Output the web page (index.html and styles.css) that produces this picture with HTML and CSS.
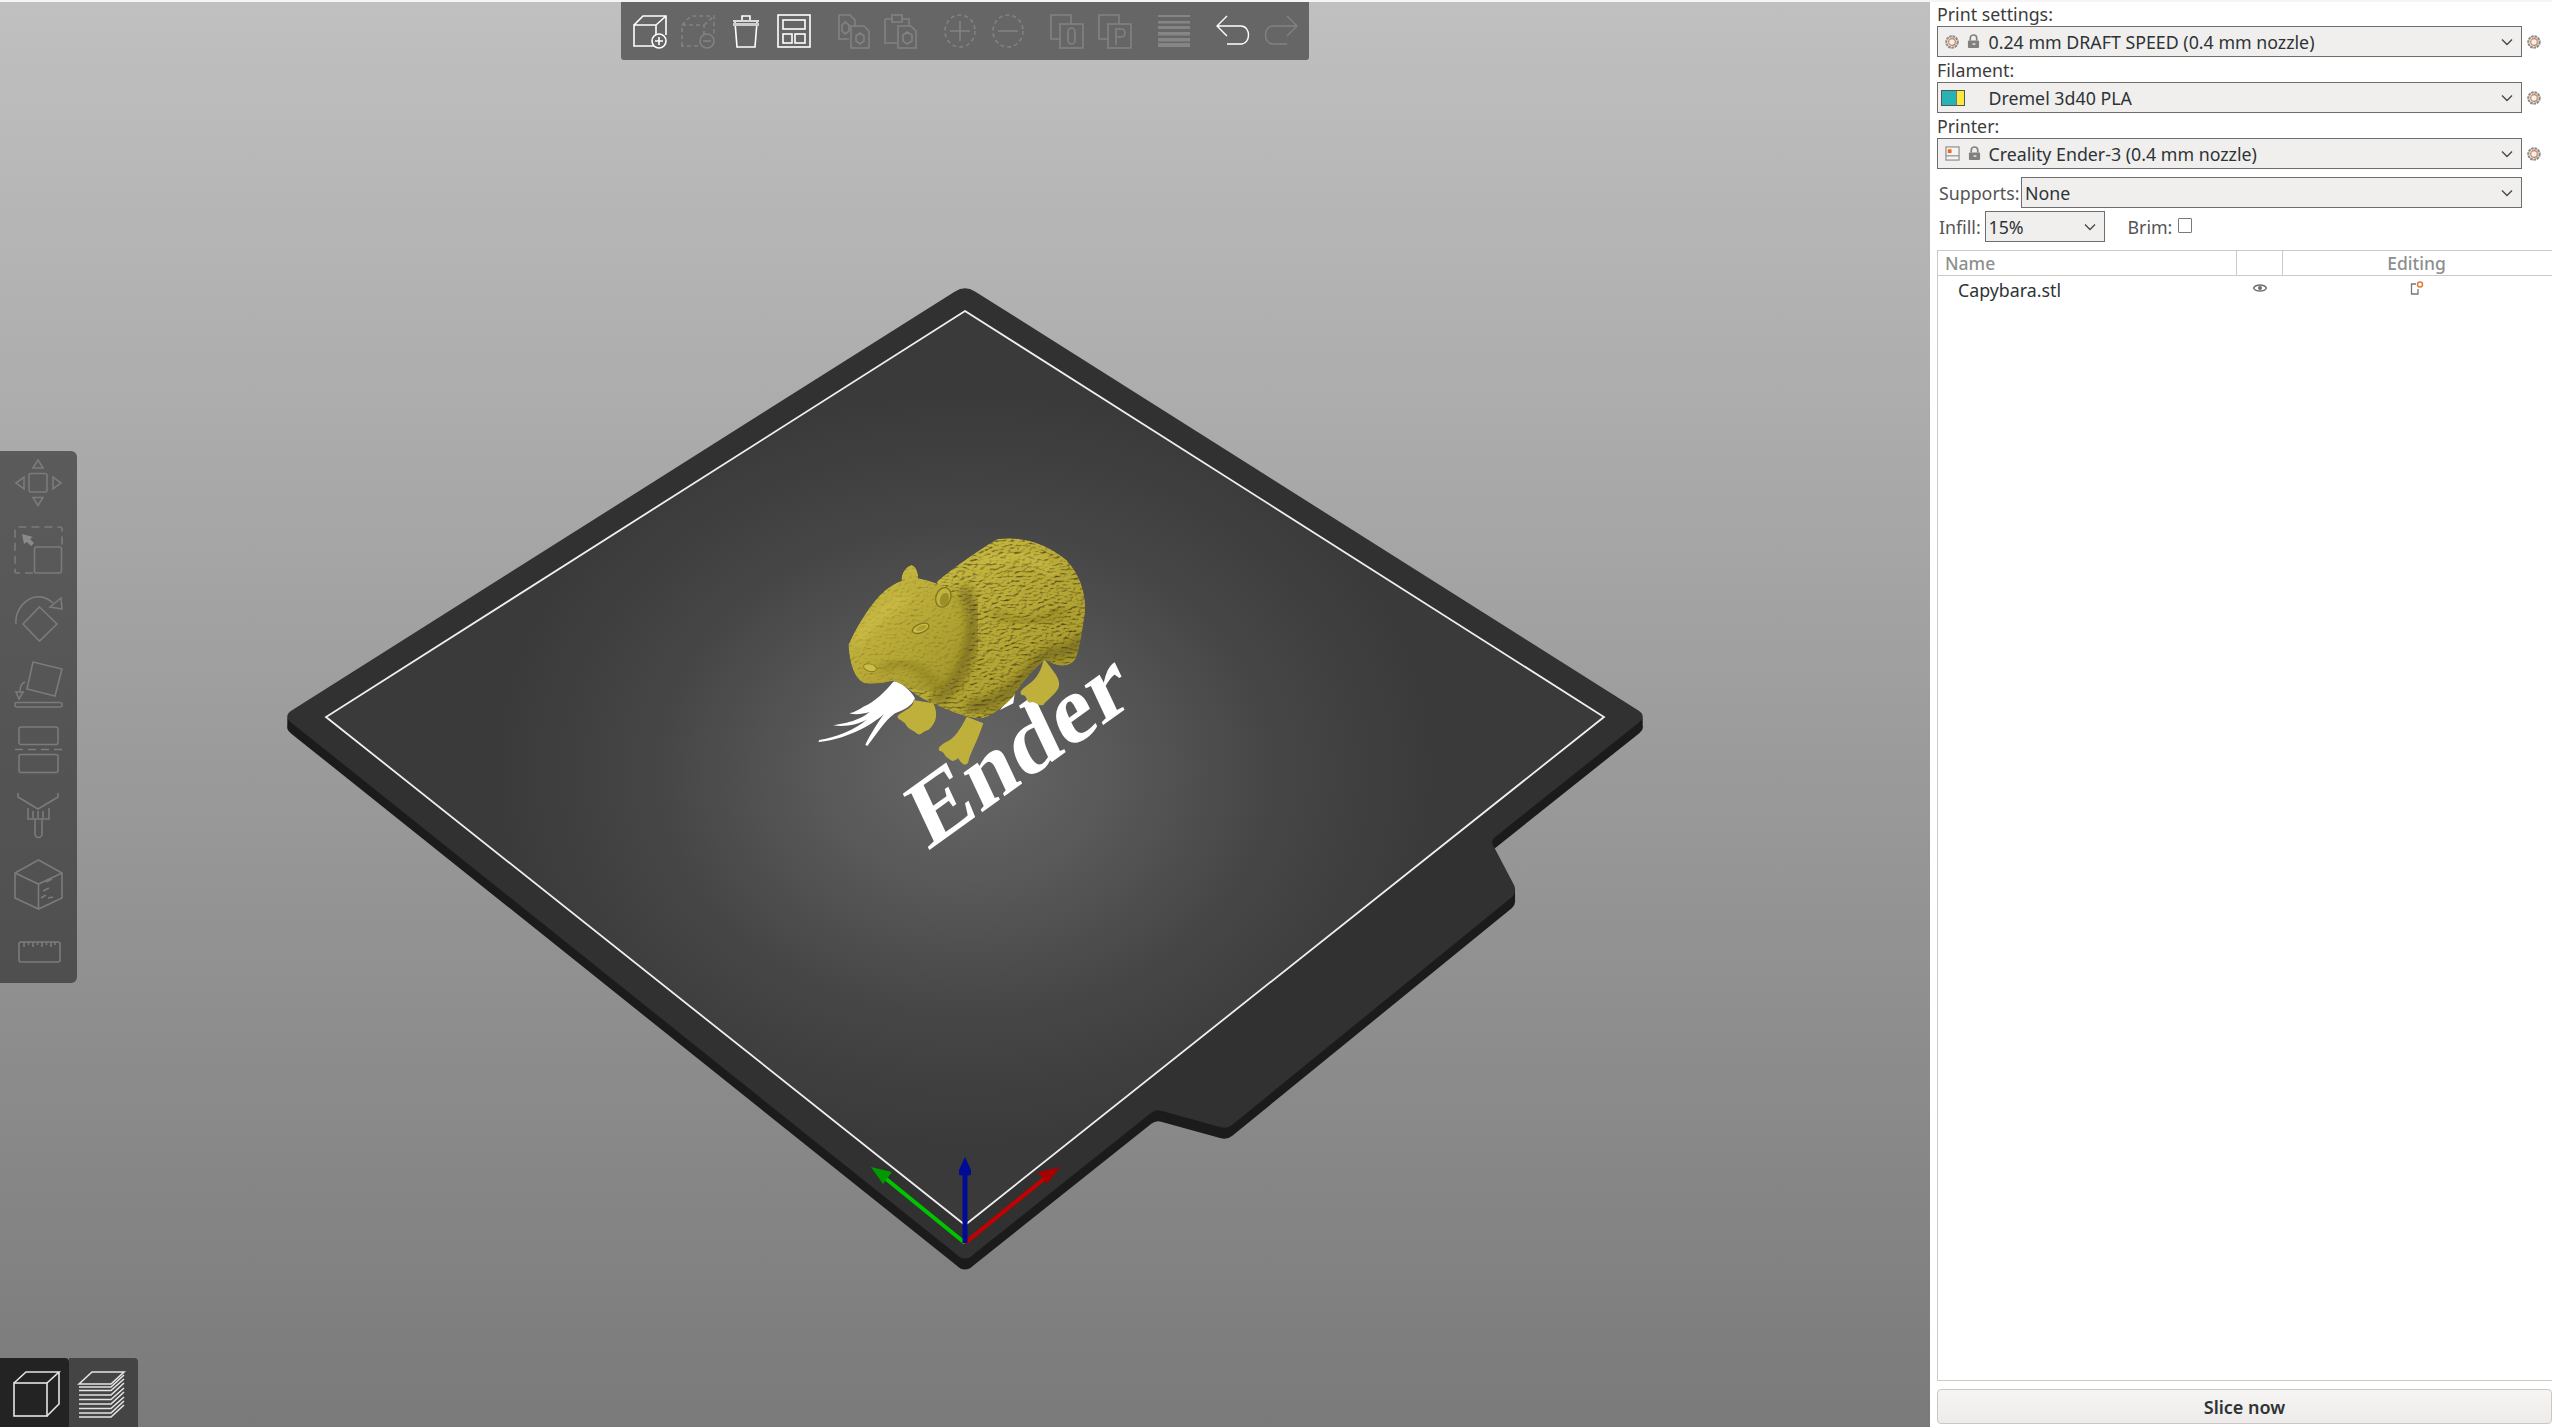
FILE: index.html
```html
<!DOCTYPE html>
<html lang="en">
<head>
<meta charset="utf-8">
<title>PrusaSlicer</title>
<link rel="stylesheet" href="styles.css">
</head>
<body>
<div class="app">
  <main class="viewport">
    <svg class="scene" viewBox="0 0 1930 1425" aria-hidden="true">
      <defs>
        <radialGradient id="bedGlow" gradientUnits="userSpaceOnUse" cx="965" cy="770" r="470" gradientTransform="translate(965 770) scale(1 .8) translate(-965 -770)">
          <stop offset="0" stop-color="#666666"/>
          <stop offset=".3" stop-color="#595959"/>
          <stop offset=".65" stop-color="#464646"/>
          <stop offset="1" stop-color="#3a3a3a"/>
        </radialGradient>
        <linearGradient id="gold" x1="0" y1="0" x2="1" y2="1">
          <stop offset="0" stop-color="#cfc046"/>
          <stop offset=".5" stop-color="#b9aa37"/>
          <stop offset="1" stop-color="#a09329"/>
        </linearGradient>
        <path id="plate" d="M955 291.400Q965 285 975 291.400L1638 710.300Q1647 716 1639 722.400L1494 838Q1491 841 1493 845L1514 885Q1517 892 1512 897L1232 1125Q1227 1129 1220 1127L1162 1111Q1156 1109 1151 1113L974 1254Q965 1263 956 1254L291 722.400Q283 716 292 710.300Z"/>
        <filter id="fur" x="0" y="0" width="1" height="1" color-interpolation-filters="sRGB">
          <feTurbulence type="fractalNoise" baseFrequency=".06 .14" numOctaves="4" seed="7" result="n"/>
          <feDiffuseLighting in="n" surfaceScale="5" lighting-color="#ffffff" diffuseConstant="1.150" result="l">
            <feDistantLight azimuth="235" elevation="60"/>
          </feDiffuseLighting>
          <feComposite in="SourceGraphic" in2="l" operator="arithmetic" k1="1" result="m"/>
          <feComposite in="m" in2="SourceAlpha" operator="in"/>
        </filter>
        <filter id="softFur" x="0" y="0" width="1" height="1" color-interpolation-filters="sRGB">
          <feTurbulence type="fractalNoise" baseFrequency=".08 .12" numOctaves="3" seed="3" result="n"/>
          <feDiffuseLighting in="n" surfaceScale="2.200" lighting-color="#ffffff" diffuseConstant="1.120" result="l">
            <feDistantLight azimuth="235" elevation="64"/>
          </feDiffuseLighting>
          <feComposite in="SourceGraphic" in2="l" operator="arithmetic" k1="1" result="m"/>
          <feComposite in="m" in2="SourceAlpha" operator="in"/>
        </filter>
        <filter id="blur14"><feGaussianBlur stdDeviation="14"/></filter>
        <clipPath id="capyClip">
          <path d="M470 215C520 175 580 130 650 88C720 75 800 100 860 150C900 195 920 250 915 310C905 370 900 420 885 450C865 475 830 470 795 450C770 470 730 510 700 560C660 600 620 630 590 625C550 620 500 600 470 585C430 570 400 550 370 525L500 300Z"/>
          <path d="M205 405C225 360 255 305 300 255C320 235 345 218 365 212C362 195 375 170 395 165C410 170 415 190 415 205C440 210 475 220 500 235C545 265 570 310 575 360C575 430 540 500 480 540C430 555 380 530 340 512C310 520 270 525 250 518C225 505 210 470 205 405Z"/>
        </clipPath>
      </defs>

      <g class="plate-side">
        <use href="#plate" y="3"/>
        <use href="#plate" y="6"/>
        <use href="#plate" y="9"/>
        <use href="#plate" y="11"/>
      </g>
      <use href="#plate" class="plate-top"/>
      <polygon class="plate-inner" points="965,311 1604,717 965,1225 326,717"/>

      <text class="bed-text" transform="matrix(.778 -.560 .404 .859 928 851)">Ender</text>

      <g transform="translate(780 510) scale(.33333)">
        <path class="logo" d="M340 515C360 512 395 545 405 565C395 590 370 600 345 610C315 630 285 680 262 708L256 704C270 675 292 640 312 612C270 650 190 690 115 696L118 690C170 682 225 660 262 628C235 645 190 652 160 646L200 638C225 632 250 622 268 606C250 612 225 615 208 610C225 606 238 598 250 590C285 575 315 545 340 515Z"/>
        <path class="logo" d="M660 600C680 575 695 550 708 522L700 580Z"/>
        <path class="capy" d="M795 450C825 490 845 510 835 535C820 560 800 570 790 585C770 590 765 570 750 578C735 575 745 555 725 555C715 545 730 535 750 520C770 505 785 480 790 450Z"/>
        <path class="capy" d="M400 570C405 590 375 600 355 615C345 625 365 630 375 640C385 660 400 660 410 670C420 680 425 665 445 660C470 640 475 610 460 580Z"/>
        <path class="capy" d="M560 620C545 650 530 675 510 690C490 700 470 712 478 722C495 725 490 735 505 745C520 760 525 750 535 745C545 765 560 770 565 755C570 730 590 700 610 640Z"/>
        <path class="capy capy-fur" d="M470 215C520 175 580 130 650 88C720 75 800 100 860 150C900 195 920 250 915 310C905 370 900 420 885 450C865 475 830 470 795 450C770 470 730 510 700 560C660 600 620 630 590 625C550 620 500 600 470 585C430 570 400 550 370 525L500 300Z"/>
        <path class="capy capy-head" d="M205 405C225 360 255 305 300 255C320 235 345 218 365 212C362 195 375 170 395 165C410 170 415 190 415 205C440 210 475 220 500 235C545 265 570 310 575 360C575 430 540 500 480 540C430 555 380 530 340 512C310 520 270 525 250 518C225 505 210 470 205 405Z"/>
        <g clip-path="url(#capyClip)">
          <path class="capy-shade" d="M545 235C590 290 590 370 560 450C540 510 500 550 460 570"/>
          <path class="capy-shade" d="M560 590C660 590 720 520 790 440C830 420 880 430 910 380"/>
          <path class="capy-shade thin" d="M300 480C360 440 420 460 470 530"/>
          <path class="capy-shade thin" d="M640 300C700 360 780 340 860 300"/>
          <path class="capy-light" d="M230 395C270 340 320 290 380 262"/>
          <path class="capy-light" d="M610 160C680 120 760 130 820 190"/>
        </g>
        <ellipse class="capy-ear" cx="490" cy="262" rx="22" ry="30" transform="rotate(20 490 262)"/>
        <ellipse class="capy-ear-in" cx="493" cy="268" rx="13" ry="20" transform="rotate(20 493 268)"/>
        <ellipse class="capy-eye" cx="422" cy="355" rx="26" ry="13" transform="rotate(-22 422 355)"/>
        <ellipse class="capy-eye-in" cx="424" cy="354" rx="17" ry="7" transform="rotate(-22 424 354)"/>
        <ellipse class="capy-nose" cx="270" cy="473" rx="20" ry="11" transform="rotate(15 270 473)"/>
      </g>

      <g class="axis axis-green">
        <line x1="965" y1="1243" x2="885" y2="1178"/>
        <polygon points="871,1167 892,1172 883,1184"/>
      </g>
      <g class="axis axis-red">
        <line x1="965" y1="1243" x2="1045" y2="1178"/>
        <polygon points="1060,1167 1038,1172 1047,1184"/>
      </g>
      <g class="axis axis-blue">
        <line x1="965" y1="1243" x2="965" y2="1172"/>
        <polygon points="965,1157 971,1170 971,1175 965,1176 959,1175 959,1170"/>
      </g>
    </svg>

    <nav class="top-toolbar">
      <div class="tool-group">
        <svg class="tb-icon on" viewBox="0 0 34 34"><path d="M1 32V11h22v21zM1 11L10 2h23v19M23 11L33 2"/><circle class="punch" cx="26" cy="27" r="7"/><path d="M26 23v8M22 27h8"/></svg>
        <svg class="tb-icon off" viewBox="0 0 34 34"><path class="dash" d="M1 32V11h22v21zM1 11L10 2h23v19M23 11L33 2"/><circle class="punch" cx="26" cy="27" r="7"/><path d="M22 27h8"/></svg>
        <svg class="tb-icon on" viewBox="0 0 34 34"><path d="M4 7h26M13 6V2h8v4M6 8l2 25h18l2-25"/><path class="thick" d="M4 10.500h26"/></svg>
        <svg class="tb-icon on" viewBox="0 0 34 34"><rect x="1" y="1" width="32" height="32"/><rect x="6" y="6" width="22" height="9"/><rect x="6" y="20" width="9" height="9"/><rect x="18" y="20" width="10" height="9"/></svg>
      </div>
      <div class="tool-group">
        <svg class="tb-icon off" viewBox="0 0 34 34"><path d="M3 1h11l5 5v6M3 1v24h10M21 12h7l5 5v17H15V12zM24 19l4 3v5l-4 3-4-3v-5z"/><path d="M9 8l4 3v6l-4 3-3-3v-6z"/></svg>
        <svg class="tb-icon off" viewBox="0 0 34 34"><path d="M1 5h7V1h10v4h7v6M8 5v3h10V5M1 5v24h12M14 12h13l5 5v17H14zM23 18l5 3v6l-5 3-4-3v-6z"/></svg>
      </div>
      <div class="tool-group">
        <svg class="tb-icon off" viewBox="0 0 34 34"><ellipse class="dash" cx="17" cy="17" rx="15" ry="16"/><path d="M17 7v20M7 17h20"/></svg>
        <svg class="tb-icon off" viewBox="0 0 34 34"><ellipse class="dash" cx="17" cy="17" rx="15" ry="16"/><path d="M7 17h20"/></svg>
      </div>
      <div class="tool-group">
        <svg class="tb-icon off" viewBox="0 0 34 34"><path d="M10 25H1V1h20v9"/><rect x="10" y="10" width="23" height="24"/><rect x="18" y="14" width="7" height="16" rx="3.500"/></svg>
        <svg class="tb-icon off" viewBox="0 0 34 34"><path d="M10 25H1V1h20v9"/><rect x="10" y="10" width="23" height="24"/><path d="M18 31V15h5a4 4 0 010 8h-5"/></svg>
      </div>
      <div class="tool-group">
        <svg class="tb-icon off bars" viewBox="0 0 34 34"><rect x="1" y="1" width="32" height="2"/><rect x="1" y="7" width="32" height="2.500"/><rect x="1" y="12" width="32" height="3"/><rect x="1" y="18" width="32" height="3.500"/><rect x="1" y="24" width="32" height="3.500"/><rect x="1" y="29" width="32" height="4"/></svg>
      </div>
      <div class="tool-group">
        <svg class="tb-icon on thin" viewBox="0 0 34 34"><path d="M1 12h24c10 0 10 18 0 18H11M11 2L1 12l10 10"/></svg>
        <svg class="tb-icon off thin" viewBox="0 0 34 34"><path d="M33 12H9C-1 12-1 30 9 30h14M23 2l10 10-10 10"/></svg>
      </div>
    </nav>

    <nav class="left-toolbar">
      <svg class="lt-icon" viewBox="0 0 48 48"><rect x="15" y="14.500" width="18" height="18.500" rx="2"/><path d="M24 1l-5 8h10zM24 46.500l-5-8h10zM2 24l8-6v12zM47 24l-8-6v12z"/></svg>
      <svg class="lt-icon" viewBox="0 0 48 48"><path class="dash-l" d="M19 47H3a2 2 0 01-2-2V3a2 2 0 012-2h43a2 2 0 012 2v16"/><rect x="20.500" y="21" width="27" height="26" rx="2"/><path class="fill-l" d="M8 8l11 3-3 2 4 4-3 3-4-4-3 2z"/></svg>
      <svg class="lt-icon" viewBox="0 0 48 48"><path d="M25.500 14L43 31 25.500 48 9 31zM2 31C0 12 22-6 39 10M47 5l-11 9 12 2z"/></svg>
      <svg class="lt-icon" viewBox="0 0 48 48"><rect x="1" y="43.500" width="47" height="4.500" rx="2"/><path d="M19 3l29 7-7 27-28-7zM11 23C8 24 6 27 6 33M2 33h7l-4 7z"/></svg>
      <svg class="lt-icon" viewBox="0 0 48 48"><rect x="5" y="1" width="39" height="17.500" rx="2"/><rect x="5" y="28.500" width="39" height="18" rx="2"/><path class="dash-l" d="M1 23.500h47"/></svg>
      <svg class="lt-icon" viewBox="0 0 48 48"><path d="M4 0v4l20 12 20-12V0M14 15v11h21V15M19 18v7M24 18v7M29 18v7M21 26v15a3 3 0 007 0V26"/></svg>
      <svg class="lt-icon" viewBox="0 0 48 48"><path d="M24.500 0L48 13v25L24.500 49 1 38V13zM1 13l23.500 11L48 13M24.500 24v25M32 22l6-3M29 31l6-3M27 38l5-3M34 38l5-1"/></svg>
      <svg class="lt-icon" viewBox="0 0 48 48"><path d="M7 15h37a2 2 0 012 2v16a2 2 0 01-2 2H7a2 2 0 01-2-2V17a2 2 0 012-2zM10 15v5M14.500 15v3M19 15v5M23.500 15v3M28 15v5M32.500 15v3M37 15v5M41 15v3"/></svg>
    </nav>

    <nav class="view-toolbar">
      <div class="view-btn active">
        <svg class="view-icon" viewBox="0 0 54 54"><rect x="4" y="14" width="33" height="33"/><path d="M4 14L16 3h33l-12 11M49 3v32L37 47"/></svg>
      </div>
      <div class="view-btn second">
        <svg class="view-icon" viewBox="0 0 54 54"><path d="M2 15L15 3h32L34 15zM2 18h32L47 6M2 21.500h32L47 10M2 26h32L47 14M2 30.500h32L47 19M2 35h32L47 23M2 39.500h32L47 28M2 44h32L47 32M2 48h32L47 36"/></svg>
      </div>
    </nav>
  </main>

  <aside class="sidebar">
    <div class="field-label">Print settings:</div>
    <div class="preset-row">
      <div class="combo combo-preset">
        <span class="combo-icons">
          <svg class="ico-gear" viewBox="0 0 16 16"><circle class="gear-out" cx="8" cy="8" r="6.500"/><circle class="gear-in" cx="8" cy="8" r="3.800"/></svg>
          <svg class="ico-lock" viewBox="0 0 14 16"><path class="lock-bow" d="M3.500 7V4.500a3.500 3.500 0 017 0V7"/><rect class="lock-body" x="1" y="7" width="12" height="8" rx="1"/><rect class="lock-hole" x="6" y="10" width="3" height="1.500"/></svg>
        </span>
        <span class="combo-text">0.24 mm DRAFT SPEED (0.4 mm nozzle)</span>
        <svg class="chev" viewBox="0 0 12 8"><path d="M1 1.500l5 5 5-5"/></svg>
      </div>
      <svg class="ico-gear side-gear" viewBox="0 0 16 16"><circle class="gear-out" cx="8" cy="8" r="6.500"/><circle class="gear-in" cx="8" cy="8" r="3.800"/></svg>
    </div>
    <div class="field-label">Filament:</div>
    <div class="preset-row">
      <div class="combo combo-preset">
        <span class="combo-icons combo-swatch-wrap"><span class="swatch"><span class="swatch-a"></span><span class="swatch-b"></span></span></span>
        <span class="combo-text">Dremel 3d40 PLA</span>
        <svg class="chev" viewBox="0 0 12 8"><path d="M1 1.500l5 5 5-5"/></svg>
      </div>
      <svg class="ico-gear side-gear" viewBox="0 0 16 16"><circle class="gear-out" cx="8" cy="8" r="6.500"/><circle class="gear-in" cx="8" cy="8" r="3.800"/></svg>
    </div>
    <div class="field-label">Printer:</div>
    <div class="preset-row">
      <div class="combo combo-preset">
        <span class="combo-icons">
          <svg class="ico-printer" viewBox="0 0 16 16"><rect class="prn-box" x="1" y="1" width="14" height="14"/><path class="prn-line" d="M1 10.500h14"/><rect class="prn-dot" x="3" y="3.500" width="4" height="4"/></svg>
          <svg class="ico-lock" viewBox="0 0 14 16"><path class="lock-bow" d="M3.500 7V4.500a3.500 3.500 0 017 0V7"/><rect class="lock-body" x="1" y="7" width="12" height="8" rx="1"/><rect class="lock-hole" x="6" y="10" width="3" height="1.500"/></svg>
        </span>
        <span class="combo-text">Creality Ender-3 (0.4 mm nozzle)</span>
        <svg class="chev" viewBox="0 0 12 8"><path d="M1 1.500l5 5 5-5"/></svg>
      </div>
      <svg class="ico-gear side-gear" viewBox="0 0 16 16"><circle class="gear-out" cx="8" cy="8" r="6.500"/><circle class="gear-in" cx="8" cy="8" r="3.800"/></svg>
    </div>
    <div class="option-row supports-row">
      <span class="opt-label">Supports:</span>
      <div class="combo combo-supports">
        <span class="combo-text">None</span>
        <svg class="chev" viewBox="0 0 12 8"><path d="M1 1.500l5 5 5-5"/></svg>
      </div>
    </div>
    <div class="option-row infill-row">
      <span class="opt-label">Infill:</span>
      <div class="combo combo-infill">
        <span class="combo-text">15%</span>
        <svg class="chev" viewBox="0 0 12 8"><path d="M1 1.500l5 5 5-5"/></svg>
      </div>
      <span class="opt-label brim-label">Brim:</span>
      <span class="checkbox"></span>
    </div>
    <section class="objects">
      <div class="obj-head">
        <span class="col-name">Name</span>
        <span class="col-eye"></span>
        <span class="col-edit">Editing</span>
      </div>
      <div class="obj-row">
        <span class="cell-name">Capybara.stl</span>
        <span class="cell-eye">
          <svg class="ico-eye" viewBox="0 0 14 10"><path d="M.5 5C3 1 11 1 13.500 5 11 9 3 9 .5 5z"/><circle cx="7" cy="5" r="2"/></svg>
        </span>
        <span class="cell-edit">
          <svg class="ico-edit" viewBox="0 0 14 14"><path class="edit-doc" d="M6 3H1.500v10h6.500V8"/><circle class="edit-dot" cx="10" cy="3.500" r="2.500"/></svg>
        </span>
      </div>
    </section>
    <button class="slice-btn" type="button">Slice now</button>
  </aside>
</div>
</body>
</html>
```
FILE: styles.css
```css
* { box-sizing: border-box; }
html, body { margin: 0; height: 100%; overflow: hidden; }
body {
  font-family: "Noto Sans", "Liberation Sans", sans-serif;
  font-size: 17.800px;
  color: #2e3436;
  background: #f6f5f4;
}
.app { display: flex; height: 1427px; padding-top: 2px; }

/* 3D viewport */
.viewport {
  position: relative;
  flex: 0 0 1930px;
  background: linear-gradient(#c0c0c0, #7a7a7a);
  overflow: hidden;
}
.scene { position: absolute; inset: 0; width: 1930px; height: 1425px; transform: translateY(-2px); overflow: visible; }
.plate-side { fill: #1b1b1b; }
.plate-top { fill: #313131; }
.plate-inner { fill: url(#bedGlow); stroke: #efefef; stroke-width: 1.8; stroke-linejoin: miter; }
.bed-text { font-family: "Liberation Serif", serif; font-weight: 700; font-size: 100px; fill: #fff; }
.logo { fill: #fff; }
.capy { fill: #bfb03c; }
.capy-fur { fill: url(#gold); filter: url(#fur); }
.capy-head { fill: url(#gold); filter: url(#softFur); }
.capy-shade { fill: none; stroke: #5f570f; stroke-width: 36; stroke-opacity: .6; filter: url(#blur14); }
.capy-shade.thin { stroke-width: 20; stroke-opacity: .4; }
.capy-light { fill: none; stroke: #e0d156; stroke-width: 20; stroke-opacity: .45; filter: url(#blur14); }
.capy-ear { fill: #c2b33e; stroke: #7f751c; stroke-width: 4; }
.capy-ear-in { fill: #9a8e28; }
.capy-eye { fill: #cdbe46; stroke: #7f751c; stroke-width: 4; }
.capy-eye-in { fill: #ad9f30; }
.capy-nose { fill: #cdbe46; stroke: #8b8026; stroke-width: 3; }
.axis line { stroke-width: 4; }
.axis-green line { stroke: #00c400; }
.axis-green polygon { fill: #009a00; }
.axis-red line { stroke: #c40000; }
.axis-red polygon { fill: #a80000; }
.axis-blue line { stroke: #000c96; stroke-width: 5; }
.axis-blue polygon { fill: #000c96; }

/* top toolbar */
.top-toolbar {
  position: absolute;
  top: 0;
  left: 621px;
  width: 688px;
  height: 58px;
  padding: 0 12px;
  display: flex;
  align-items: center;
  gap: 25px;
  background: #666;
  border-radius: 0 0 3px 3px;
}
.tool-group { display: flex; gap: 14px; }
.tb-icon { width: 34px; height: 34px; fill: none; stroke-width: 1.6; overflow: visible; }
.tb-icon.on { stroke: #fff; }
.tb-icon.off { stroke: #828282; }
.tb-icon .dash { stroke-dasharray: 4 3; }
.tb-icon .punch { fill: #666; }
.tb-icon .thick { stroke-width: 3; stroke: #ccc; }
.tb-icon.bars { fill: #858585; stroke: none; }
.tb-icon.thin { stroke-width: 1.4; }

/* left toolbar */
.left-toolbar {
  position: absolute;
  left: 0;
  top: 449px;
  width: 77px;
  height: 532px;
  padding: 8px 0 0 14px;
  display: flex;
  flex-direction: column;
  gap: 18.800px;
  background: linear-gradient(#5b5b5b, #4f4f4f);
  border-radius: 0 6px 6px 0;
}
.lt-icon { flex: none; width: 48px; height: 48px; fill: none; stroke: #7b7b7b; stroke-width: 1.6; overflow: visible; }
.lt-icon .dash-l { stroke-dasharray: 8 5; }
.lt-icon .fill-l { fill: #8a8a8a; stroke: none; }

/* view toolbar */
.view-toolbar {
  position: absolute;
  left: 0;
  bottom: 0;
  display: flex;
  height: 69px;
}
.view-btn {
  width: 69px;
  display: flex;
  align-items: center;
  justify-content: center;
  background: #444;
  border-radius: 0 4px 0 0;
}
.view-btn.active { background: #232323; padding-left: 4px; }
.view-icon { width: 54px; height: 54px; fill: none; stroke: #e4e4e4; stroke-width: 1.600; margin-top: 6px; }

/* sidebar */
.sidebar {
  flex: 1;
  min-width: 0;
  display: flex;
  flex-direction: column;
  padding-left: 7px;
  background: #fff;
}
.field-label {
  height: 25px;
  line-height: 26px;
  color: #3c3c3c;
}
.field-label:first-child { height: 24px; line-height: 25px; }
.preset-row { display: flex; align-items: center; gap: 5px; height: 31px; }
.combo {
  display: flex;
  align-items: center;
  height: 31px;
  background: #f0efee;
  border: 1px solid #6e6e6e;
  color: #2e3436;
}
.combo-preset { width: 585px; flex: none; }
.combo-icons { flex: none; width: 50.500px; display: flex; align-items: center; gap: 8px; padding-left: 7px; }
.combo-text { flex: 1; white-space: nowrap; }
.chev { flex: none; width: 12px; height: 8px; margin-right: 8px; fill: none; stroke: #4a4a4a; stroke-width: 1.4; }
.ico-gear { flex: none; width: 14px; height: 16px; }
.gear-out { fill: #efefef; stroke: #8c8c8c; stroke-width: 2.400; stroke-dasharray: 3 .8; }
.gear-in { fill: #f4f0ea; stroke: #cf7d4c; stroke-width: 1.300; }
.ico-lock { flex: none; width: 13px; height: 15px; }
.lock-bow { fill: none; stroke: #808080; stroke-width: 1.800; }
.lock-body { fill: #808080; }
.lock-hole { fill: #f0efee; }
.combo-swatch-wrap { padding-left: 3px; }
.swatch { display: flex; width: 24px; height: 16px; border: 1px solid #555; }
.swatch-a { flex: 2; background: #27b3b3; }
.swatch-b { flex: 1; background: #fbe93f; border-left: 1px solid #777; }
.ico-printer { flex: none; width: 15px; height: 15px; }
.prn-box { fill: #f4f3f2; stroke: #888; stroke-width: 1.2; }
.prn-line { stroke: #888; stroke-width: 1.2; }
.prn-dot { fill: #ee6a1c; }
.option-row { display: flex; align-items: center; padding-left: 2px; height: 31px; }
.opt-label { color: #555; white-space: nowrap; }
.supports-row { margin-top: 8px; }
.supports-row .opt-label { width: 82px; }
.combo-supports { width: 501px; flex: none; padding-left: 3px; }
.infill-row { margin-top: 3px; }
.infill-row .opt-label { width: 45.500px; }
.combo-infill { width: 120px; flex: none; padding-left: 3px; }
.infill-row .brim-label { width: 50px; margin-left: 23px; }
.checkbox { width: 14px; height: 15px; margin-top: -2px; border: 1px solid #7a7a7a; border-radius: 1px; background: #fff; }

/* object list */
.objects {
  flex: 1;
  min-height: 0;
  margin-top: 8px;
  border: 1px solid #cdc9c5;
  border-right: 0;
  background: #fff;
}
.obj-head {
  display: flex;
  height: 25px;
  line-height: 24px;
  border-bottom: 1px solid #cdc9c5;
  color: #8d8f8f;
  font-weight: 500;
  font-size: 17.500px;
}
.col-name { width: 299px; padding-left: 7px; border-right: 1px solid #cdc9c5; }
.col-eye { width: 46px; border-right: 1px solid #cdc9c5; }
.col-edit { flex: 1; text-align: center; padding-right: 2px; }
.obj-row { display: flex; height: 27px; align-items: center; }
.cell-name { width: 299px; padding-left: 20px; }
.cell-eye { width: 46px; display: flex; justify-content: center; margin-top: -3px; }
.cell-edit { flex: 1; display: flex; justify-content: center; margin-top: -4px; padding-right: 2px; }
.ico-eye { width: 14px; height: 10px; fill: none; stroke: #6c6c6c; stroke-width: 1.400; }
.ico-eye circle { fill: #6c6c6c; stroke: none; }
.ico-edit { width: 14px; height: 14px; fill: none; }
.edit-doc { stroke: #777; stroke-width: 1.300; }
.edit-dot { stroke: #dd7a3c; stroke-width: 1.500; }

/* slice button */
.slice-btn {
  flex: none;
  height: 35px;
  margin: 8px 0 3px;
  width: 100%;
  font: 600 18px "Noto Sans", "Liberation Sans", sans-serif;
  color: #2e3436;
  background: linear-gradient(#f6f5f4, #edecea);
  border: 1px solid #cdc7c2;
  border-radius: 4px;
}
```
